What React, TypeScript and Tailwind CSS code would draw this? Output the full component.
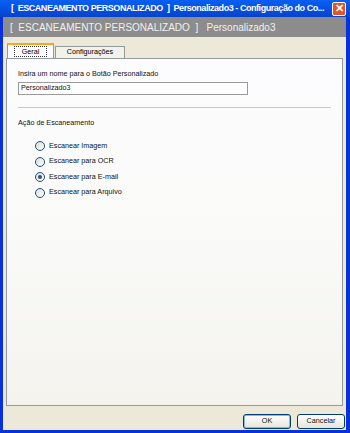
import React from 'react';

const opcoes = [
  { label: 'Escanear Imagem', checked: false },
  { label: 'Escanear para OCR', checked: false },
  { label: 'Escanear para E-mail', checked: true },
  { label: 'Escanear para Arquivo', checked: false },
];

function Radio({ checked }: { checked: boolean }) {
  return (
    <span className="flex h-[10px] w-[10px] items-center justify-center rounded-full border border-[#1c5180] bg-gradient-to-br from-[#dcdcd6] to-white">
      {checked && <span className="h-[4px] w-[4px] rounded-full bg-[#3d4a6a]" />}
    </span>
  );
}

export default function App() {
  return (
    <div className="flex h-[433px] w-[350px] flex-col bg-[#0831d9] font-['Liberation_Sans',Arial,sans-serif]">
      {/* barra de título */}
      <div className="flex h-[17px] items-center bg-gradient-to-b from-[#0a5ef0] via-[#0551e6] to-[#0543c8] pl-[11px] pr-[4px]">
        <span className="flex-1 whitespace-nowrap text-[9px] font-bold tracking-[-0.45px] text-white">
          [ &nbsp;ESCANEAMENTO PERSONALIZADO &nbsp;] &nbsp;Personalizado3 - Configuração do Co...
        </span>
        <span className="flex h-[14px] w-[14px] shrink-0 items-center justify-center rounded-[2px] border border-white bg-[#e0532b] text-[11px] font-bold leading-none text-white">
          ✕
        </span>
      </div>

      <div className="mx-[3px] mb-[3px] mr-[4px] flex flex-1 flex-col bg-[#ece9d8]">
        {/* faixa cinza */}
        <div className="flex h-[20px] items-center bg-[#8c8c8c] pl-[7px] text-[10px] text-[#f0f0f0]">
          [ &nbsp;ESCANEAMENTO PERSONALIZADO &nbsp;] &nbsp; Personalizado3
        </div>

        {/* abas */}
        <div className="mt-[6px] flex items-end pl-[4px] text-[7.2px] text-black">
          <div className="flex h-[15px] w-[47px] items-center justify-center border-x border-t-2 border-[#919b9c] border-t-[#f5a623] bg-[#fcfcfe] pb-[1px]">
            <span className="border border-dotted border-[#333] px-[7px] leading-[9px]">Geral</span>
          </div>
          <div className="ml-[1px] flex h-[12px] w-[70px] items-center justify-center border border-b-0 border-[#919b9c] bg-[#f2f1ea]">
            Configurações
          </div>
        </div>

        {/* painel */}
        <div className="mx-[3px] flex h-[348px] flex-col border border-[#919b9c] bg-gradient-to-b from-[#fcfcfe] via-[#fafaf8] to-[#f4f3ee] px-[11px] pt-[10px] text-[7.2px] text-[#111]">
          <div className="leading-[10px]">Insira um nome para o Botão Personalizado</div>
          <div className="mt-[3px] flex h-[13px] w-[230px] items-center border border-[#9a9a9a] bg-white pl-[2px]">
            Personalizado3
          </div>
          <div className="mt-[12px] h-[2px] w-[313px] border-t border-[#c8c8c8] border-b-white" />
          <div className="mt-[9px] leading-[10px]">Ação de Escaneamento</div>
          <div className="mt-[13px] flex flex-col gap-[5.5px] pl-[17px]">
            {opcoes.map((o) => (
              <div key={o.label} className="flex h-[10px] items-center gap-[4px]">
                <Radio checked={o.checked} />
                <span>{o.label}</span>
              </div>
            ))}
          </div>
        </div>

        {/* botões */}
        <div className="mt-[8px] flex justify-end gap-[6px] pr-[1px] text-[7.2px] text-[#111]">
          <button className="flex h-[15px] w-[48px] items-center justify-center rounded-[3px] border border-[#003c74] bg-gradient-to-b from-white to-[#e6e4da] shadow-[inset_0_0_0_1px_#8cb4f2]">
            OK
          </button>
          <button className="flex h-[15px] w-[48px] items-center justify-center rounded-[3px] border border-[#003c74] bg-gradient-to-b from-white to-[#e6e4da]">
            Cancelar
          </button>
        </div>
      </div>
    </div>
  );
}
